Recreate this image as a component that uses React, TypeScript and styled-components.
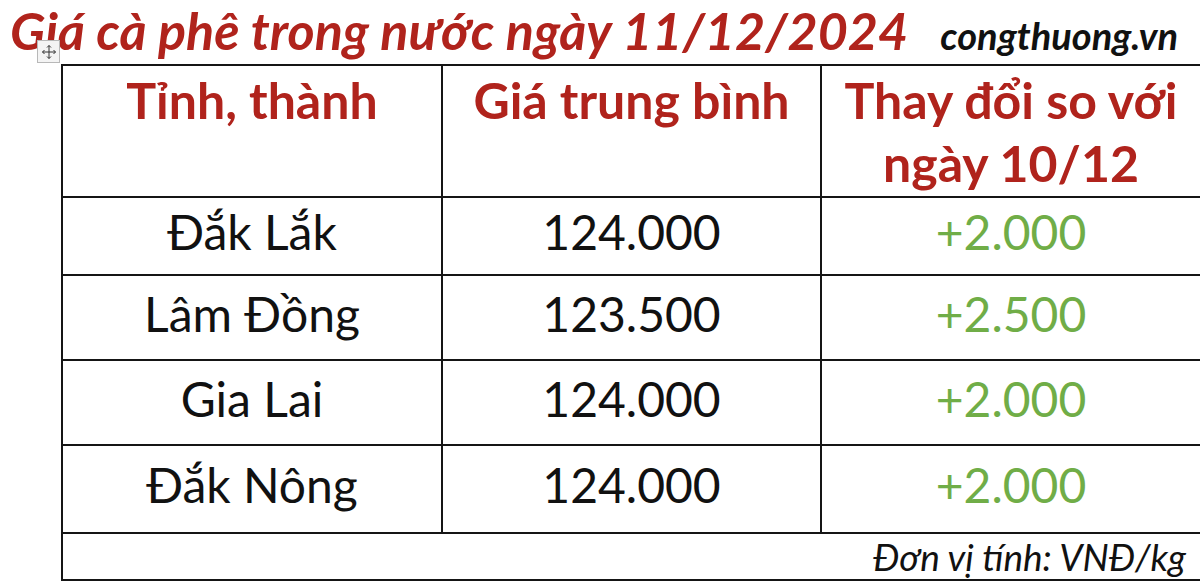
import React from "react";
import styled, { createGlobalStyle } from "styled-components";

const Global = createGlobalStyle`
  html, body { margin: 0; padding: 0; background: #ffffff; }
  body { font-family: Lato, "Open Sans", sans-serif; }
`;

const Page = styled.div`
  width: 1200px;
  height: 584px;
  overflow: hidden;
  background: #fff;
`;

const TitleBar = styled.div`
  display: flex;
  align-items: baseline;
  height: 64px;
  padding-left: 10px;
  box-sizing: border-box;
`;

const Title = styled.h1`
  margin: 0;
  font-family: Lato, sans-serif;
  font-style: italic;
  font-weight: 700;
  font-size: 52px;
  line-height: 60px;
  color: #b0231c;
  white-space: nowrap;
`;

const Site = styled.span`
  margin-left: auto;
  margin-right: 22px;
  font-family: Lato, sans-serif;
  font-style: italic;
  font-weight: 700;
  font-size: 38px;
  color: #111;
`;

const TableWrap = styled.div`
  position: relative;
  margin-left: 61px;
  width: 1139px;
`;

const MoveHandle = styled.div`
  position: absolute;
  left: -24px;
  top: -24px;
  width: 21px;
  height: 21px;
  border: 1px solid #b8b8b8;
  background: #f4f4f4;
  display: flex;
  align-items: center;
  justify-content: center;
`;

const Table = styled.table`
  width: 100%;
  border-collapse: collapse;
  table-layout: fixed;
`;

const Cell = styled.td<{ $h: number }>`
  border: 2px solid #151515;
  height: ${(p) => p.$h}px;
  padding: 0 0 8px 0;
  text-align: center;
  vertical-align: middle;
  font-family: Lato, sans-serif;
  font-size: 48px;
  color: #111;
  line-height: 1;
`;

const HeadCell = styled(Cell)`
  vertical-align: top;
  padding: 3px 0 0 0;
  font-weight: 700;
  font-size: 50px;
  line-height: 63px;
  color: #b0231c;
`;

const ChangeCell = styled(Cell)`
  color: #70ad47;
`;

const NoteCell = styled(Cell)`
  text-align: right;
  padding: 0 14px 0 0;
  font-style: italic;
  font-size: 37px;
`;

const rows = [
  { name: "Đắk Lắk", price: "124.000", change: "+2.000", h: 68 },
  { name: "Lâm Đồng", price: "123.500", change: "+2.500", h: 75 },
  { name: "Gia Lai", price: "124.000", change: "+2.000", h: 75 },
  { name: "Đắk Nông", price: "124.000", change: "+2.000", h: 78 },
];

export default function App() {
  return (
    <Page>
      <Global />
      <TitleBar>
        <Title>Giá cà phê trong nước ngày 11/12/2024</Title>
        <Site>congthuong.vn</Site>
      </TitleBar>
      <TableWrap>
        <MoveHandle>
          <svg width="16" height="16" viewBox="0 0 16 16" fill="none" stroke="#333" strokeWidth="1">
            <path d="M8 1.5v13M1.5 8h13" />
            <path d="M6 3.5L8 1.5L10 3.5M6 12.5L8 14.5L10 12.5M3.5 6L1.5 8L3.5 10M12.5 6L14.5 8L12.5 10" />
          </svg>
        </MoveHandle>
        <Table>
          <colgroup>
            <col style={{ width: 380 }} />
            <col style={{ width: 379 }} />
            <col style={{ width: 380 }} />
          </colgroup>
          <tbody>
            <tr>
              <HeadCell $h={127}>Tỉnh, thành</HeadCell>
              <HeadCell $h={127}>Giá trung bình</HeadCell>
              <HeadCell $h={127}>
                Thay đổi so với
                <br />
                ngày 10/12
              </HeadCell>
            </tr>
            {rows.map((r) => (
              <tr key={r.name}>
                <Cell $h={r.h}>{r.name}</Cell>
                <Cell $h={r.h}>{r.price}</Cell>
                <ChangeCell $h={r.h}>{r.change}</ChangeCell>
              </tr>
            ))}
            <tr>
              <NoteCell $h={45} colSpan={3}>
                Đơn vị tính: VNĐ/kg
              </NoteCell>
            </tr>
          </tbody>
        </Table>
      </TableWrap>
    </Page>
  );
}
